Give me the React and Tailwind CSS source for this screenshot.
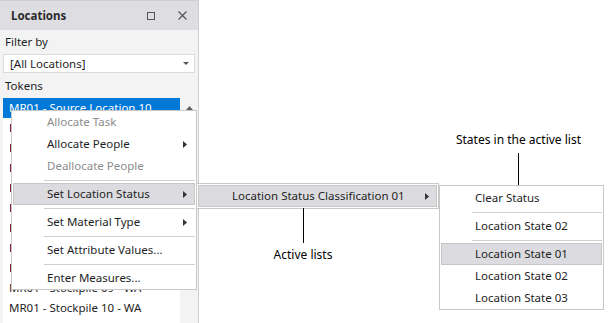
import React from "react";

function Arrow() {
  return (
    <svg width="4" height="7" viewBox="0 0 4 7">
      <path d="M0 0L4 3.5L0 7Z" fill="#333" />
    </svg>
  );
}

function Item({ label, disabled, arrow, active }) {
  return (
    <div
      className={`h-[22px] flex items-center justify-between pl-[33px] pr-[7px] border ${
        active ? "bg-[#dcdce0] border-[#c6c6c6]" : "border-transparent"
      } ${disabled ? "text-[#8c8c8c]" : "text-[#1e1e1e]"}`}
    >
      <span>{label}</span>
      {arrow && <Arrow />}
    </div>
  );
}

function Sep() {
  return (
    <div className="h-[6px] flex items-center pl-[31px]">
      <div className="h-px w-full bg-[#d0d0d0]" />
    </div>
  );
}

// rows hidden behind the context menu only show the edge of their first letter
const hiddenRows = [1, 2, 3, 4, 5, 6, 7, 8];

export default function App() {
  return (
    <div className="relative w-[612px] h-[323px] overflow-hidden bg-white flex font-['Noto_Sans',sans-serif] text-[11.5px] leading-none">
      {/* Locations panel */}
      <div className="w-[199px] h-full flex flex-col bg-[#f3f3f3] border-r border-[#cfcfd3]">
        <div className="h-[30px] shrink-0 flex items-center justify-between bg-[#dedee2] border-t border-[#d0d0d4] pl-[11px] pr-[11px]">
          <span className="font-bold text-[#2b2b2b]">Locations</span>
          <div className="flex items-center gap-[23px]">
            <div className="w-[8px] h-[8px] border border-[#555]" />
            <svg width="9" height="9" viewBox="0 0 9 9">
              <path d="M0.5 0.5L8.5 8.5M8.5 0.5L0.5 8.5" stroke="#555" strokeWidth="1.2" />
            </svg>
          </div>
        </div>
        <div className="h-[24px] flex items-center pl-[5px] text-[#1e1e1e]">Filter by</div>
        <div className="mx-[3px] h-[19px] flex items-center justify-between bg-white border border-[#dadada] pl-[6px] pr-[5px] text-[#1e1e1e]">
          <span>[All Locations]</span>
          <svg width="6" height="3" viewBox="0 0 6 3">
            <path d="M0 0L6 0L3 3Z" fill="#555" />
          </svg>
        </div>
        <div className="h-[25px] flex items-center pl-[5px] text-[#1e1e1e]">Tokens</div>
        <div className="flex-1 flex pl-[3px]">
          <div className="w-[177px] bg-white">
            <div className="h-[20px] flex items-center pl-[6px] bg-[#0078d7] text-white">
              MR01 - Source Location 10
            </div>
            {hiddenRows.map((r) => (
              <div key={r} className="h-[20px] flex items-center">
                <div className="ml-[7px] w-px h-[8px] bg-[#7b2635]" />
              </div>
            ))}
            <div className="h-[20px] flex items-center pl-[6px] text-[#1e1e1e]">
              MR01 - Stockpile 09 - WA
            </div>
            <div className="h-[20px] flex items-center pl-[6px] text-[#1e1e1e]">
              MR01 - Stockpile 10 - WA
            </div>
          </div>
          <div className="flex-1 flex justify-center pt-[8px]">
            <svg width="7" height="4" viewBox="0 0 7 4">
              <path d="M0 4L7 4L3.5 0Z" fill="#606060" />
            </svg>
          </div>
        </div>
      </div>

      {/* Context menu */}
      <div className="absolute left-[11px] top-[110px] w-[186px] bg-white border border-[#c8c8c8] px-px">
        <Item label="Allocate Task" disabled />
        <Item label="Allocate People" arrow />
        <Item label="Deallocate People" disabled />
        <Sep />
        <Item label="Set Location Status" arrow active />
        <Sep />
        <Item label="Set Material Type" arrow />
        <Sep />
        <Item label="Set Attribute Values..." />
        <Sep />
        <Item label="Enter Measures..." />
      </div>

      {/* Classification submenu */}
      <div className="absolute left-[196px] top-[183px] w-[243px] bg-white border border-[#c8c8c8] p-px">
        <Item label="Location Status Classification 01" arrow active />
      </div>

      {/* States submenu */}
      <div className="absolute left-[439px] top-[185px] w-[165px] bg-white border border-[#c8c8c8] px-px pt-px">
        <Item label="Clear Status" />
        <Sep />
        <Item label="Location State 02" />
        <Sep />
        <Item label="Location State 01" active />
        <Item label="Location State 02" />
        <Item label="Location State 03" />
      </div>

      {/* Callouts */}
      <div className="absolute left-[262px] top-[208px] w-[82px] flex flex-col items-center text-[12px]">
        <div className="w-px h-[35px] bg-black" />
        <div className="mt-[6px] text-black">Active lists</div>
      </div>
      <div className="absolute left-[448px] top-[134px] w-[141px] flex flex-col items-center text-[12px]">
        <div className="text-black">States in the active list</div>
        <div className="mt-[7px] w-px h-[32px] bg-black" />
      </div>
    </div>
  );
}
